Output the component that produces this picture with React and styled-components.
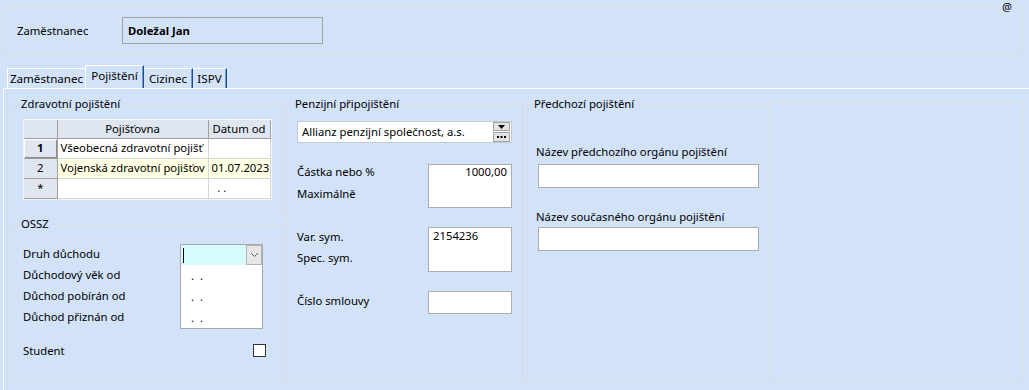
import React from "react";
import styled, { createGlobalStyle } from "styled-components";

const GlobalStyle = createGlobalStyle`
  html, body { margin: 0; padding: 0; background: #d2e2f8; }
  body {
    font-family: "Noto Sans", "Segoe UI", sans-serif;
    font-size: 11.3px;
    color: #000;
  }
  #root { width: 1029px; height: 390px; overflow: hidden; }
`;

const Page = styled.div`
  width: 1029px;
  height: 390px;
  background: #d2e2f8;
  display: flex;
  flex-direction: column;
`;

const Group = styled.fieldset`
  margin: 0;
  padding: 0;
  min-width: 0;
  box-sizing: border-box;
  border: 1px solid #d9dde3;
`;

const Legend = styled.legend`
  padding: 0 1px;
  margin-left: ${(p) => p.$indent ?? 7}px;
  line-height: 16px;
`;

const GroupBody = styled.div`
  padding: ${(p) => p.$pad};
`;

/* ---------- header ---------- */
const HeaderGroup = styled(Group)`
  margin: 0 6px 0 3px;
`;

const AtLegend = styled.legend`
  margin-left: auto;
  margin-right: 8px;
  padding: 0 2px;
  font-size: 11px;
  line-height: 14px;
`;

const HeaderRow = styled.div`
  display: flex;
  align-items: center;
  padding: 3px 0 10px 13px;
`;

const HeaderLabel = styled.div`
  width: 105px;
  line-height: 16px;
`;

const ReadOnlyBox = styled.div`
  width: 201px;
  height: 27px;
  box-sizing: border-box;
  border: 1px solid #a3a3a3;
  padding-left: 5px;
  display: flex;
  align-items: center;
  font-weight: bold;
`;

/* ---------- tabs ---------- */
const TabStrip = styled.div`
  display: flex;
  align-items: flex-end;
  height: 23px;
  margin: 10px 0 0 7px;
`;

const Tab = styled.div`
  box-sizing: border-box;
  width: ${(p) => p.$w}px;
  height: ${(p) => (p.$active ? 23 : 20)}px;
  border-top: 1px solid #ffffff;
  border-left: ${(p) => (p.$edge ? "1px solid #ffffff" : "none")};
  border-right: ${(p) => (p.$shadow ? "1px solid #1d4d8c" : "none")};
  box-shadow: ${(p) => (p.$shadow ? "inset -1px 0 0 #6c9ad4" : "none")};
  display: flex;
  align-items: center;
  justify-content: center;
  padding-bottom: ${(p) => (p.$active ? 2 : 0)}px;
  line-height: 16px;
  font-size: 11.6px;
  white-space: nowrap;
`;

const Panel = styled.div`
  flex: 1;
  margin-left: 3px;
  border-top: 1px solid #ffffff;
  border-left: 1px solid #ffffff;
  padding: 7px 0 0 8px;
`;

const GroupsRow = styled.div`
  display: flex;
  align-items: stretch;
  height: 286px;
`;

const LeftColumn = styled.div`
  width: 272px;
  display: flex;
  flex-direction: column;
  margin-right: 2px;
`;

/* ---------- health insurance ---------- */
const HealthGroup = styled(Group)`
  height: 120px;
  flex: none;
  border-bottom: none;
`;

const GridFrame = styled.div`
  width: 249px;
  box-sizing: border-box;
  border: 1px solid #f2f5fa;
  background: #f7f9fc;
`;

const GridTable = styled.table`
  border-collapse: collapse;
  table-layout: fixed;
  width: 246px;
`;

const HeadCell = styled.th`
  width: ${(p) => p.$w}px;
  height: 18px;
  padding: 0;
  box-sizing: border-box;
  background: #dfe6ef;
  border-right: 1px solid #a0a0a0;
  border-bottom: 1px solid #a0a0a0;
  font-weight: normal;
  text-align: center;
  line-height: 16px;
`;

const RowHead = styled.th`
  height: 20px;
  padding: 0;
  box-sizing: border-box;
  background: #dfe6ef;
  border-right: 1px solid #a0a0a0;
  border-bottom: 1px solid #a0a0a0;
  font-weight: ${(p) => (p.$current ? "bold" : "normal")};
  text-align: center;
  line-height: 16px;
  box-shadow: ${(p) =>
    p.$current ? "inset 1px 1px 0 #ffffff, inset -1px -1px 0 #8c8c8c" : "none"};
`;

const Cell = styled.td`
  height: 20px;
  padding: 0 0 0 3px;
  box-sizing: border-box;
  background: ${(p) => (p.$hl ? "#ffffe3" : "#ffffff")};
  border-right: 1px solid #d4d4d4;
  border-bottom: 1px solid #d4d4d4;
  white-space: nowrap;
  overflow: hidden;
  line-height: 16px;
`;

/* ---------- OSSZ ---------- */
const OsszGroup = styled(Group)`
  flex: 1;
`;

const OsszRow = styled.div`
  display: flex;
  align-items: flex-start;
`;

const LabelColumn = styled.div`
  width: ${(p) => p.$w}px;
  flex: none;
  display: flex;
  flex-direction: column;
`;

const Label = styled.div`
  height: ${(p) => p.$h ?? 21}px;
  line-height: ${(p) => p.$h ?? 21}px;
  white-space: nowrap;
`;

const DateBox = styled.div`
  width: 83px;
  height: 85px;
  margin-top: 1px;
  box-sizing: border-box;
  border: 1px solid #a8a8a8;
  background: #ffffff;
  display: flex;
  flex-direction: column;
`;

const ComboRow = styled.div`
  height: 21px;
  display: flex;
  align-items: center;
  background: #d6fbfc;
  padding-left: 2px;
`;

const Caret = styled.span`
  width: 1px;
  height: 15px;
  background: #000;
  flex: none;
`;

const DropButton = styled.div`
  margin-left: auto;
  width: 16px;
  height: 20px;
  box-sizing: border-box;
  border: 1px solid #b3b3b3;
  background: #e7e7e7;
  display: flex;
  align-items: center;
  justify-content: center;
`;

const MaskRow = styled.div`
  height: 21px;
  line-height: 21px;
  padding-left: 10px;
  white-space: pre;
`;

const StudentRow = styled.div`
  width: 243px;
  margin-top: 11px;
  height: 20px;
  display: flex;
  align-items: center;
  justify-content: space-between;
`;

const CheckBox = styled.div`
  width: 13px;
  height: 13px;
  box-sizing: border-box;
  border: 1px solid #333333;
  background: #ffffff;
`;

/* ---------- pension ---------- */
const PensionGroup = styled(Group)`
  width: 237px;
  margin-right: 4px;
`;

const Combo = styled.div`
  width: 215px;
  height: 22px;
  box-sizing: border-box;
  border: 1px solid #c6cacf;
  background: #ffffff;
  display: flex;
  align-items: center;
  padding-left: 4px;
`;

const ComboText = styled.span`
  flex: 1;
  white-space: nowrap;
  line-height: 16px;
`;

const ComboButtons = styled.div`
  display: flex;
  flex-direction: column;
  gap: 1px;
  margin-right: 1px;
`;

const MiniButton = styled.div`
  width: 17px;
  height: ${(p) => p.$h}px;
  box-sizing: border-box;
  border: 1px solid #a5a5a5;
  background: #e3e3e3;
  display: flex;
  align-items: center;
  justify-content: center;
`;

const FieldBlock = styled.div`
  display: flex;
  align-items: flex-start;
  margin-top: ${(p) => p.$gap}px;
`;

const ValueBox = styled.div`
  width: 84px;
  height: ${(p) => p.$h}px;
  margin-top: ${(p) => p.$top ?? 0}px;
  box-sizing: border-box;
  border: 1px solid #adadad;
  background: #ffffff;
  text-align: ${(p) => p.$align ?? "left"};
  padding: 0 4px;
  line-height: ${(p) => p.$lh ?? 16}px;
`;

/* ---------- previous ---------- */
const PreviousGroup = styled(Group)`
  width: 242px;
  border-right: none;
`;

const FieldCaption = styled.div`
  line-height: 16px;
  margin-top: ${(p) => p.$top ?? 0}px;
  white-space: nowrap;
`;

const WideInput = styled.div`
  width: 221px;
  height: 24px;
  margin: ${(p) => p.$top}px 0 0 2px;
  box-sizing: border-box;
  border: 1px solid #adadad;
  background: #ffffff;
`;

const EmptyGroup = styled(Group)`
  width: 255px;
  margin-top: 7px;
`;

const Chevron = () => (
  <svg width="9" height="6" viewBox="0 0 9 6">
    <path d="M1 1 L4.5 4.5 L8 1" fill="none" stroke="#606060" strokeWidth="1" />
  </svg>
);

const Triangle = () => (
  <svg width="7" height="4" viewBox="0 0 7 4">
    <path d="M0 0 H7 L3.5 4 Z" fill="#000" />
  </svg>
);

const Dots = () => (
  <svg width="9" height="2" viewBox="0 0 9 2">
    <rect x="0" y="0" width="2" height="2" fill="#000" />
    <rect x="3.5" y="0" width="2" height="2" fill="#000" />
    <rect x="7" y="0" width="2" height="2" fill="#000" />
  </svg>
);

export default function App() {
  return (
    <Page>
      <GlobalStyle />
      <HeaderGroup>
        <AtLegend>@</AtLegend>
        <HeaderRow>
          <HeaderLabel>Zaměstnanec</HeaderLabel>
          <ReadOnlyBox>Doležal Jan</ReadOnlyBox>
        </HeaderRow>
      </HeaderGroup>

      <TabStrip>
        <Tab $w={78} $edge>Zaměstnanec</Tab>
        <Tab $w={59} $edge $shadow $active>Pojištění</Tab>
        <Tab $w={49} $shadow>Cizinec</Tab>
        <Tab $w={34} $shadow>ISPV</Tab>
      </TabStrip>

      <Panel>
        <GroupsRow>
          <LeftColumn>
            <HealthGroup>
              <Legend>Zdravotní pojištění</Legend>
              <GroupBody $pad="7px 0 0 10px">
                <GridFrame>
                  <GridTable>
                    <thead>
                      <tr>
                        <HeadCell $w={33} />
                        <HeadCell $w={151}>Pojišťovna</HeadCell>
                        <HeadCell $w={62}>Datum od</HeadCell>
                      </tr>
                    </thead>
                    <tbody>
                      <tr>
                        <RowHead $current>1</RowHead>
                        <Cell>Všeobecná zdravotní pojišť</Cell>
                        <Cell />
                      </tr>
                      <tr>
                        <RowHead>2</RowHead>
                        <Cell $hl>Vojenská zdravotní pojišťov</Cell>
                        <Cell $hl>01.07.2023</Cell>
                      </tr>
                      <tr>
                        <RowHead>*</RowHead>
                        <Cell />
                        <Cell>&nbsp;&nbsp;. .</Cell>
                      </tr>
                    </tbody>
                  </GridTable>
                </GridFrame>
              </GroupBody>
            </HealthGroup>

            <OsszGroup>
              <Legend>OSSZ</Legend>
              <GroupBody $pad="11px 0 0 10px">
                <OsszRow>
                  <LabelColumn $w={157}>
                    <Label>Druh důchodu</Label>
                    <Label>Důchodový věk od</Label>
                    <Label>Důchod pobírán od</Label>
                    <Label>Důchod přiznán od</Label>
                  </LabelColumn>
                  <DateBox>
                    <ComboRow>
                      <Caret />
                      <DropButton>
                        <Chevron />
                      </DropButton>
                    </ComboRow>
                    <MaskRow>{".  ."}</MaskRow>
                    <MaskRow>{".  ."}</MaskRow>
                    <MaskRow>{".  ."}</MaskRow>
                  </DateBox>
                </OsszRow>
                <StudentRow>
                  <span>Student</span>
                  <CheckBox />
                </StudentRow>
              </GroupBody>
            </OsszGroup>
          </LeftColumn>

          <PensionGroup>
            <Legend>Penzijní připojištění</Legend>
            <GroupBody $pad="9px 0 0 10px">
              <Combo>
                <ComboText>Allianz penzijní společnost, a.s.</ComboText>
                <ComboButtons>
                  <MiniButton $h={9}>
                    <Triangle />
                  </MiniButton>
                  <MiniButton $h={10}>
                    <Dots />
                  </MiniButton>
                </ComboButtons>
              </Combo>

              <FieldBlock $gap={18}>
                <LabelColumn $w={131}>
                  <Label $h={22}>Částka nebo %</Label>
                  <Label $h={22}>Maximálně</Label>
                </LabelColumn>
                <ValueBox $h={44} $top={3} $align="right" $lh={14}>
                  1000,00
                </ValueBox>
              </FieldBlock>

              <FieldBlock $gap={18}>
                <LabelColumn $w={131}>
                  <Label>Var. sym.</Label>
                  <Label>Spec. sym.</Label>
                </LabelColumn>
                <ValueBox $h={45} $top={1}>
                  2154236
                </ValueBox>
              </FieldBlock>

              <FieldBlock $gap={19}>
                <LabelColumn $w={131}>
                  <Label $h={20}>Číslo smlouvy</Label>
                </LabelColumn>
                <ValueBox $h={23} />
              </FieldBlock>
            </GroupBody>
          </PensionGroup>

          <PreviousGroup>
            <Legend $indent={5}>Předchozí pojištění</Legend>
            <GroupBody $pad="32px 0 0 8px">
              <FieldCaption>Název předchozího orgánu pojištění</FieldCaption>
              <WideInput $top={4} />
              <FieldCaption $top={21}>Název současného orgánu pojištění</FieldCaption>
              <WideInput $top={2} />
            </GroupBody>
          </PreviousGroup>

          <EmptyGroup />
        </GroupsRow>
      </Panel>
    </Page>
  );
}
